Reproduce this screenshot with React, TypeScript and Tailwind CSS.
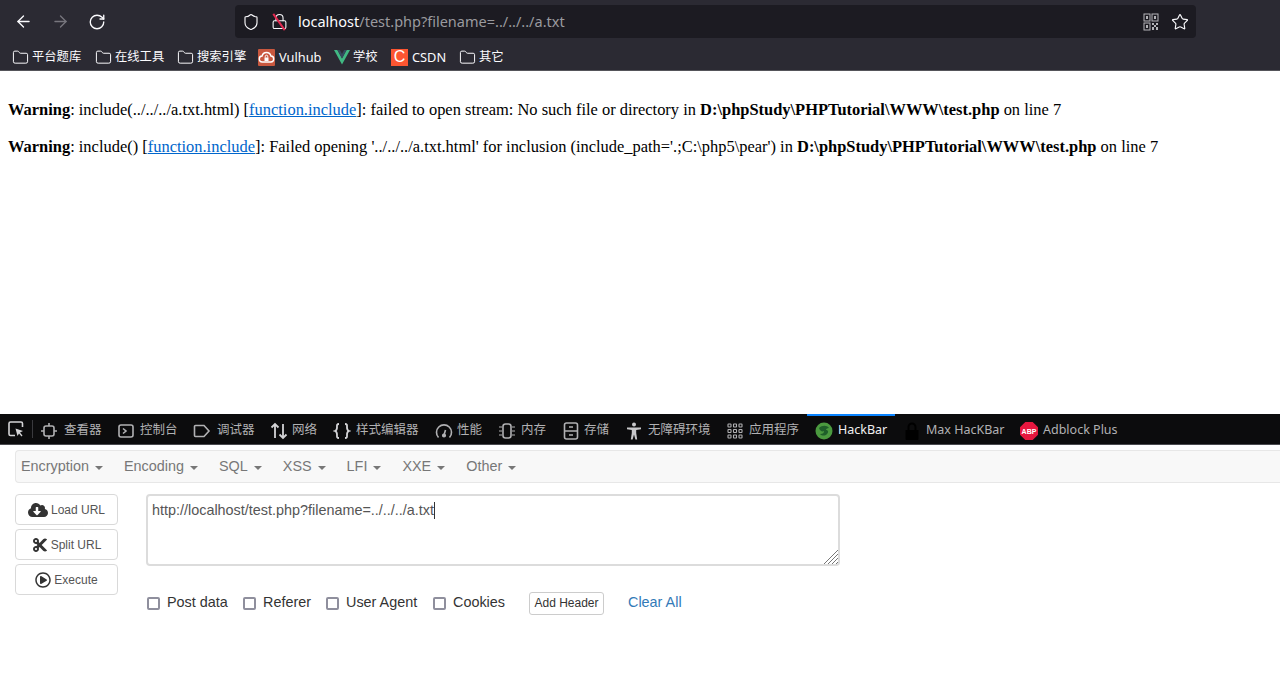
import { ArrowLeft, ArrowRight, RotateCw, Shield, Star, Folder, Lock } from 'lucide-react';
import { FaCloudDownloadAlt, FaCut, FaRegPlayCircle } from 'react-icons/fa';

const cjk = "font-['Noto_Sans','Noto_Sans_CJK_SC',sans-serif]";

const QrIcon = () => (
  <svg width="16" height="18" viewBox="0 0 16 18" fill="none" stroke="#b4b4b8" strokeWidth="1">
    <rect x="1" y="1" width="6" height="7" />
    <rect x="9" y="1" width="6" height="7" />
    <rect x="1" y="10" width="6" height="7" />
    <rect x="3" y="3" width="2" height="3" fill="#b4b4b8" stroke="none" />
    <rect x="11" y="3" width="2" height="3" fill="#b4b4b8" stroke="none" />
    <rect x="3" y="12" width="2" height="3" fill="#b4b4b8" stroke="none" />
    <path d="M9 10h2v2H9zM13 10h2v2h-2zM11 12h2v2h-2zM9 14h2v3H9zM13 14h2v3h-2z" fill="#b4b4b8" stroke="none" />
  </svg>
);

const VulhubIcon = () => (
  <svg width="17" height="17" viewBox="0 0 17 17">
    <rect width="17" height="17" rx="1" fill="#c9583f" />
    <path d="M4.500 13a3 3 0 0 1-.4-6 4.500 4.500 0 0 1 8.800 0 3 3 0 0 1-.4 6z" fill="none" stroke="#fff" strokeWidth="1.400" />
    <rect x="6.500" y="8.500" width="4" height="3.500" fill="#fff" />
    <path d="M7.300 8.500V7.400a1.200 1.200 0 0 1 2.400 0v1.100" fill="none" stroke="#fff" />
  </svg>
);

const VueIcon = () => (
  <svg width="16" height="16" viewBox="0 0 16 16">
    <path d="M0 1h3.400L8 9.600 12.600 1H16L8 15.500z" fill="#41b883" />
    <path d="M3.400 1h2.500L8 5l2.100-4h2.500L8 9.600z" fill="#35495e" />
  </svg>
);

const CsdnIcon = () => (
  <span className="flex h-[17px] w-[17px] items-center justify-center bg-[#fc5531] font-['Liberation_Sans',sans-serif] text-[16px] leading-none text-white">
    C
  </span>
);

const FolderIcon = () => <Folder size={17} strokeWidth={1.4} className="text-[#fbfbfe]" />;

const Bookmark = ({ icon, label, className, latin }: { icon: React.ReactNode; label: string; className: string; latin?: boolean }) => (
  <div className={`flex items-center ${latin ? 'gap-[4px]' : 'gap-[3px]'} ${className}`}>
    {icon}
    <span className={`leading-none text-[#fbfbfe] ${latin ? 'text-[12.800px]' : 'text-[12.300px]'}`}>{label}</span>
  </div>
);

const stroke = { fill: 'none', stroke: '#b1b1b3', strokeWidth: 1.6 };

const tabIcons: Record<string, React.ReactNode> = {
  inspector: (
    <svg width="16" height="18" viewBox="0 0 16 18" {...stroke}>
      <rect x="3" y="4" width="10" height="10" rx="2" />
      <path d="M8 1v3M8 14v3M0 9h3M13 9h3" />
    </svg>
  ),
  console: (
    <svg width="16" height="16" viewBox="0 0 16 16" {...stroke}>
      <rect x="1" y="2" width="14" height="12" rx="2" />
      <path d="M5 5.500 8 8l-3 2.500" />
    </svg>
  ),
  debugger: (
    <svg width="18" height="14" viewBox="0 0 18 14" {...stroke}>
      <path d="M2.500 1.500h8.500l5 5.500-5 5.500H2.500a1 1 0 0 1-1-1v-9a1 1 0 0 1 1-1z" />
    </svg>
  ),
  network: (
    <svg width="18" height="18" viewBox="0 0 18 18" fill="none" stroke="#d4d4d6" strokeWidth="1.800">
      <path d="M5 16V2M1.500 5.500 5 2l3.500 3.500M13 2v14M9.500 12.500 13 16l3.500-3.500" />
    </svg>
  ),
  style: (
    <svg width="18" height="18" viewBox="0 0 18 18" fill="none" stroke="#d4d4d6" strokeWidth="1.800">
      <path d="M6 2c-2.500 0-2 1.500-2 3.500S3.500 8.500 2 9c1.500.5 2 1.500 2 3.500S3.500 16 6 16M12 2c2.500 0 2 1.500 2 3.500s.5 3 2 3.500c-1.500.5-2 1.500-2 3.500s.5 3.500-2 3.500" />
    </svg>
  ),
  performance: (
    <svg width="18" height="16" viewBox="0 0 18 16" {...stroke}>
      <path d="M3.500 14.500a7.500 7.500 0 1 1 11 0" />
      <path d="M9 12l1.500-5" />
      <circle cx="9" cy="12.500" r="1.300" fill="#b1b1b3" />
    </svg>
  ),
  memory: (
    <svg width="18" height="16" viewBox="0 0 18 16" {...stroke}>
      <rect x="5" y="1" width="8" height="14" rx="2.500" />
      <path d="M1 4h3M1 8h3M1 12h3M14 4h3M14 8h3M14 12h3" strokeWidth="1.200" />
    </svg>
  ),
  storage: (
    <svg width="16" height="18" viewBox="0 0 16 18" {...stroke}>
      <rect x="1.500" y="1" width="13" height="16" rx="2" />
      <path d="M1.500 9h13M6 5h4M6 13h4" />
    </svg>
  ),
  accessibility: (
    <svg width="16" height="18" viewBox="0 0 16 18" fill="#c8c8ca">
      <circle cx="8" cy="2.500" r="2" />
      <path d="M1 5.500h14v1.800l-4.800.6V11l1 6.500H9.400L8 12.500l-1.400 5H4.800l1-6.500V7.900L1 7.300z" />
    </svg>
  ),
  application: (
    <svg width="16" height="16" viewBox="0 0 16 16" fill="none" stroke="#b1b1b3" strokeWidth="1.100">
      <rect x="1" y="1" width="3" height="3" rx=".5" /><rect x="6.500" y="1" width="3" height="3" rx=".5" /><rect x="12" y="1" width="3" height="3" rx=".5" />
      <rect x="1" y="6.500" width="3" height="3" rx=".5" /><rect x="6.500" y="6.500" width="3" height="3" rx=".5" /><rect x="12" y="6.500" width="3" height="3" rx=".5" />
      <rect x="1" y="12" width="3" height="3" rx=".5" /><rect x="6.500" y="12" width="3" height="3" rx=".5" /><rect x="12" y="12" width="3" height="3" rx=".5" />
    </svg>
  ),
  hackbar: (
    <svg width="18" height="18" viewBox="0 0 18 18">
      <circle cx="9" cy="9" r="8.500" fill="#4b9a3f" />
      <path d="M4 6c3-3 8-3 10 0-2 0-3 1-3 2 2 0 3 2 1 4-2 2-5 2-7 0 3 0 4-1 4-3-2 1-4 0-5-3z" fill="#1f5f2a" />
    </svg>
  ),
  maxhackbar: (
    <svg width="18" height="18" viewBox="0 0 18 18" fill="#000">
      <path d="M2.500 8h13v9a1 1 0 0 1-1 1h-11a1 1 0 0 1-1-1z" />
      <path d="M5.500 8V5a3.500 3.500 0 0 1 7 0v3" fill="none" stroke="#000" strokeWidth="2" />
    </svg>
  ),
  adblock: (
    <svg width="18" height="18" viewBox="0 0 18 18" className="shrink-0">
      <path d="M5.300 0h7.400L18 5.300v7.400L12.700 18H5.300L0 12.700V5.300z" fill="#e6173f" />
      <text x="9" y="11.500" textAnchor="middle" fontSize="7" fontWeight="700" fill="#fff" fontFamily="Liberation Sans">ABP</text>
    </svg>
  ),
};

const tabs = [
  { id: 'inspector', label: '查看器', className: 'w-[77px] gap-[7px]' },
  { id: 'console', label: '控制台', className: 'w-[75px] gap-[6px]' },
  { id: 'debugger', label: '调试器', className: 'w-[77px] gap-[6px]' },
  { id: 'network', label: '网络', className: 'w-[63px] gap-[4px]' },
  { id: 'style', label: '样式编辑器', className: 'w-[102px] gap-[5px]' },
  { id: 'performance', label: '性能', className: 'w-[63px] gap-[4px]' },
  { id: 'memory', label: '内存', className: 'w-[65px] gap-[5px]' },
  { id: 'storage', label: '存储', className: 'w-[63px] gap-[5px]' },
  { id: 'accessibility', label: '无障碍环境', className: 'w-[101px] gap-[6px]' },
  { id: 'application', label: '应用程序', className: 'w-[88px] gap-[6px]' },
  { id: 'hackbar', label: 'HackBar', className: 'w-[88px] gap-[5px]' },
  { id: 'maxhackbar', label: 'Max HacKBar', className: 'w-[117px] gap-[5px]' },
  { id: 'adblock', label: 'Adblock Plus', className: 'w-[112px] gap-[5px]' },
];

const menus = ['Encryption', 'Encoding', 'SQL', 'XSS', 'LFI', 'XXE', 'Other'];

const SideButton = ({ icon, label }: { icon: React.ReactNode; label: string }) => (
  <button className="flex h-[31px] w-[103px] items-center justify-center gap-[3px] rounded-[4px] border border-[#d9d9d9] bg-white text-[12px] text-[#555]">
    {icon}
    {label}
  </button>
);

const Check = ({ label, className }: { label: string; className: string }) => (
  <label className={`flex items-center gap-[7px] text-[14.400px] text-[#333] ${className}`}>
    <input type="checkbox" className="mt-[2px] h-[13px] w-[13px] appearance-none rounded-[2px] border-2 border-[#8f8f9d] bg-white" />
    {label}
  </label>
);

export default function App() {
  return (
    <div className="flex h-[698px] w-[1280px] flex-col overflow-hidden bg-white">
      <header className={`h-[71px] shrink-0 border-b border-[#55555a] bg-[#2b2a33] ${cjk}`}>
        <div className="flex h-[43px] items-center">
          <div className="flex w-[235px] items-center pl-[14px]">
            <ArrowLeft size={19} strokeWidth={1.7} className="text-[#fbfbfe]" />
            <ArrowRight size={19} strokeWidth={1.7} className="ml-[18px] text-[#77767e]" />
            <RotateCw size={18} strokeWidth={1.8} className="ml-[18px] text-[#fbfbfe]" />
          </div>
          <div className="flex h-[33px] w-[961px] items-center rounded-[4px] bg-[#1c1b22]">
            <Shield size={18} strokeWidth={1.5} className="ml-[7px] text-[#fbfbfe]" />
            <span className="relative ml-[11px] block h-[18px] w-[16px]">
              <Lock size={17} strokeWidth={1.5} className="text-[#fbfbfe]" />
              <span className="absolute left-[7px] top-[-1px] h-[20px] w-[2px] -rotate-[35deg] bg-[#e22850]" />
            </span>
            <span className="ml-[11px] text-[14.500px] text-[#fbfbfe]">localhost</span>
            <span className="text-[14.500px] text-[#9a9a9f]">/test.php?filename=../../../a.txt</span>
            <div className="ml-auto flex items-center gap-[12px] pr-[7px]">
              <QrIcon />
              <Star size={18} strokeWidth={1.5} className="text-[#fbfbfe]" />
            </div>
          </div>
        </div>
        <div className="flex h-[26px] items-center pl-[12px] pt-[2px]">
          <Bookmark icon={<FolderIcon />} label="平台题库" className="w-[83px]" />
          <Bookmark icon={<FolderIcon />} label="在线工具" className="w-[82px]" />
          <Bookmark icon={<FolderIcon />} label="搜索引擎" className="w-[81px]" />
          <Bookmark icon={<VulhubIcon />} label="Vulhub" className="w-[76px]" latin />
          <Bookmark icon={<VueIcon />} label="学校" className="w-[57px]" />
          <Bookmark icon={<CsdnIcon />} label="CSDN" className="w-[68px]" latin />
          <Bookmark icon={<FolderIcon />} label="其它" className="w-[60px]" />
        </div>
      </header>

      <main className="h-[343px] shrink-0 pl-[8px] pt-[30px] font-['Liberation_Serif',serif] text-[16.450px] leading-[18.500px] text-black">
        <p>
          <b>Warning</b>: include(../../../a.txt.html) [<a className="text-[#0066cc] underline">function.include</a>]: failed to open stream: No such file or directory in <b>D:\phpStudy\PHPTutorial\WWW\test.php</b> on line 7
        </p>
        <p className="mt-[18.500px]">
          <b>Warning</b>: include() [<a className="text-[#0066cc] underline">function.include</a>]: Failed opening '../../../a.txt.html' for inclusion (include_path='.;C:\php5\pear') in <b>D:\phpStudy\PHPTutorial\WWW\test.php</b> on line 7
        </p>
      </main>

      <nav className={`flex h-[31px] shrink-0 items-stretch border-b border-[#4a4a4f] bg-[#0c0c0d] ${cjk}`}>
        <div className="flex w-[32px] items-center justify-center">
          <svg width="16" height="16" viewBox="0 0 16 16" fill="none" stroke="#d4d4d6" strokeWidth="1.600">
            <path d="M7 14.500H2.500a1.500 1.500 0 0 1-1.500-1.500V2.500A1.500 1.500 0 0 1 2.500 1H13a1.500 1.500 0 0 1 1.500 1.500V6" />
            <path d="M7.500 7.500 15 10l-3 1.500 2.500 3-1 1-2.500-3L9.500 15z" fill="#d4d4d6" stroke="none" />
          </svg>
        </div>
        <div className="my-[6px] w-px bg-[#3a3a3e]" />
        {tabs.map((tab) => (
          <div
            key={tab.id}
            className={`flex shrink-0 items-center pl-[8px] pt-[1px] text-[12.500px] ${tab.className} ${
              tab.id === 'hackbar'
                ? 'border-t-2 border-[#0a84ff] text-[#f0f0f0]'
                : 'border-t-2 border-transparent text-[#b1b1b3]'
            }`}
          >
            {tabIcons[tab.id]}
            <span className="whitespace-nowrap">{tab.label}</span>
          </div>
        ))}
      </nav>

      <section className="flex-1 font-['Liberation_Sans',sans-serif]">
        <div className="ml-[15px] mt-[5px] flex h-[33px] items-center gap-[21px] rounded-l-[4px] border border-r-0 border-[#e7e7e7] bg-[#f8f8f8] pl-[5px] pt-[1px] text-[14.400px] text-[#777]">
          {menus.map((menu) => (
            <span key={menu} className="flex items-center gap-[6px]">
              {menu}
              <span className="mt-[2px] h-0 w-0 border-x-[4px] border-t-[4px] border-x-transparent border-t-[#777]" />
            </span>
          ))}
        </div>

        <div className="ml-[15px] mt-[11px] flex">
          <div className="flex w-[131px] flex-col gap-[4px]">
            <SideButton icon={<FaCloudDownloadAlt size={20} className="text-[#333]" />} label="Load URL" />
            <SideButton icon={<FaCut size={16} className="text-[#333]" />} label="Split URL" />
            <SideButton icon={<FaRegPlayCircle size={16} className="text-[#333]" />} label="Execute" />
          </div>
          <div>
            <div className="relative">
              <textarea
                readOnly
                defaultValue="http://localhost/test.php?filename=../../../a.txt"
                className="block h-[72px] w-[694px] resize-none rounded-[4px] border-2 border-[#dcdcdc] px-[4px] py-[4px] text-[14.400px] leading-[20px] text-[#555] outline-none"
              />
              <span className="absolute left-[288px] top-[8px] h-[17px] w-px bg-[#333]" />
              <svg width="14" height="14" viewBox="0 0 14 14" className="absolute bottom-[2px] right-[2px]" stroke="#777" strokeWidth="1">
                <path d="M0 14 14 0M4 14 14 4M8 14l6-6M12 14l2-2" />
              </svg>
            </div>
            <div className="mt-[25px] flex h-[24px] items-center">
              <Check label="Post data" className="ml-[1px] w-[96px]" />
              <Check label="Referer" className="w-[83px]" />
              <Check label="User Agent" className="w-[107px]" />
              <Check label="Cookies" className="w-[96px]" />
              <button className="flex h-[23px] w-[75px] items-center justify-center rounded-[3px] border border-[#ccc] bg-white text-[12px] text-[#333]">
                Add Header
              </button>
              <a className="ml-[24px] text-[14.400px] text-[#337ab7]">Clear All</a>
            </div>
          </div>
        </div>
      </section>
    </div>
  );
}
